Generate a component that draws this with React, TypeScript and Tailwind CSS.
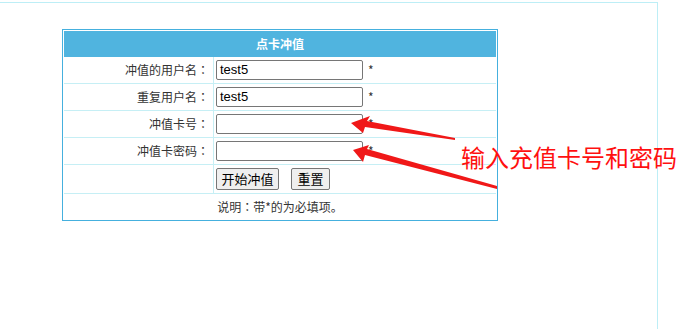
import React from "react";

const font = { fontFamily: '"Noto Sans CJK SC", "Microsoft YaHei", sans-serif' };

function Colon() {
  return <span className="font-['Noto_Sans_CJK_TC',sans-serif]">：</span>;
}

function Row({ label, value }: { label: string; value?: string }) {
  return (
    <div className="flex h-[27px] border-b border-[#c6eff5]">
      <div className="w-[150px] border-r border-[#c6eff5] flex items-center justify-end pr-[4px] text-[12px] text-[#333]">
        {label}
        <Colon />
      </div>
      <div className="flex items-center pl-[2px]">
        <div className="w-[147px] h-[20px] border border-[#767676] rounded-[2px] bg-white flex items-center px-[3px] text-[13px] text-black font-['Liberation_Sans',Arial,sans-serif]">
          {value}
        </div>
        <span className="ml-[5px] text-[12px] text-[#333] leading-none">*</span>
      </div>
    </div>
  );
}

export default function App() {
  return (
    <div className="relative w-[682px] h-[329px] bg-white overflow-hidden" style={font}>
      <div className="mt-[2px] w-[658px] h-[327px] border-t border-r border-[#bdeef6]">
        <div className="ml-[62px] mt-[26px] w-[436px] border border-[#45b0de] p-px">
          <div className="h-[26px] bg-[#50b4df] flex items-center justify-center text-white font-bold text-[12px]">
            点卡冲值
          </div>
          <Row label="冲值的用户名" value="test5" />
          <Row label="重复用户名" value="test5" />
          <Row label="冲值卡号" />
          <Row label="冲值卡密码" />
          <div className="flex h-[29px] border-b border-[#c6eff5]">
            <div className="w-[150px] border-r border-[#c6eff5]" />
            <div className="flex items-center pl-[2px] gap-[12px]">
              <button className="w-[63px] h-[22px] border border-[#767676] rounded-[2px] bg-[#efefef] text-[13px] text-black">
                开始冲值
              </button>
              <button className="w-[39px] h-[22px] border border-[#767676] rounded-[2px] bg-[#efefef] text-[13px] text-black">
                重置
              </button>
            </div>
          </div>
          <div className="h-[25px] flex items-center justify-center text-[12px] text-[#333]">
            说明<Colon />带*的为必填项。
          </div>
        </div>
      </div>

      <svg className="absolute left-0 top-0 pointer-events-none" width="682" height="329">
        <polygon
          points="351,123 370,116 367,121 455,138 455,140 365,127 363,133"
          fill="#f01818"
        />
        <polygon
          points="353,150 369,145 367,149 497,186 497,189 365,155 363,162"
          fill="#f01818"
        />
      </svg>
      <div className="absolute left-[461px] top-[145px] text-[24px] leading-[24px] text-[#ff1010] whitespace-nowrap">
        输入充值卡号和密码
      </div>
    </div>
  );
}
